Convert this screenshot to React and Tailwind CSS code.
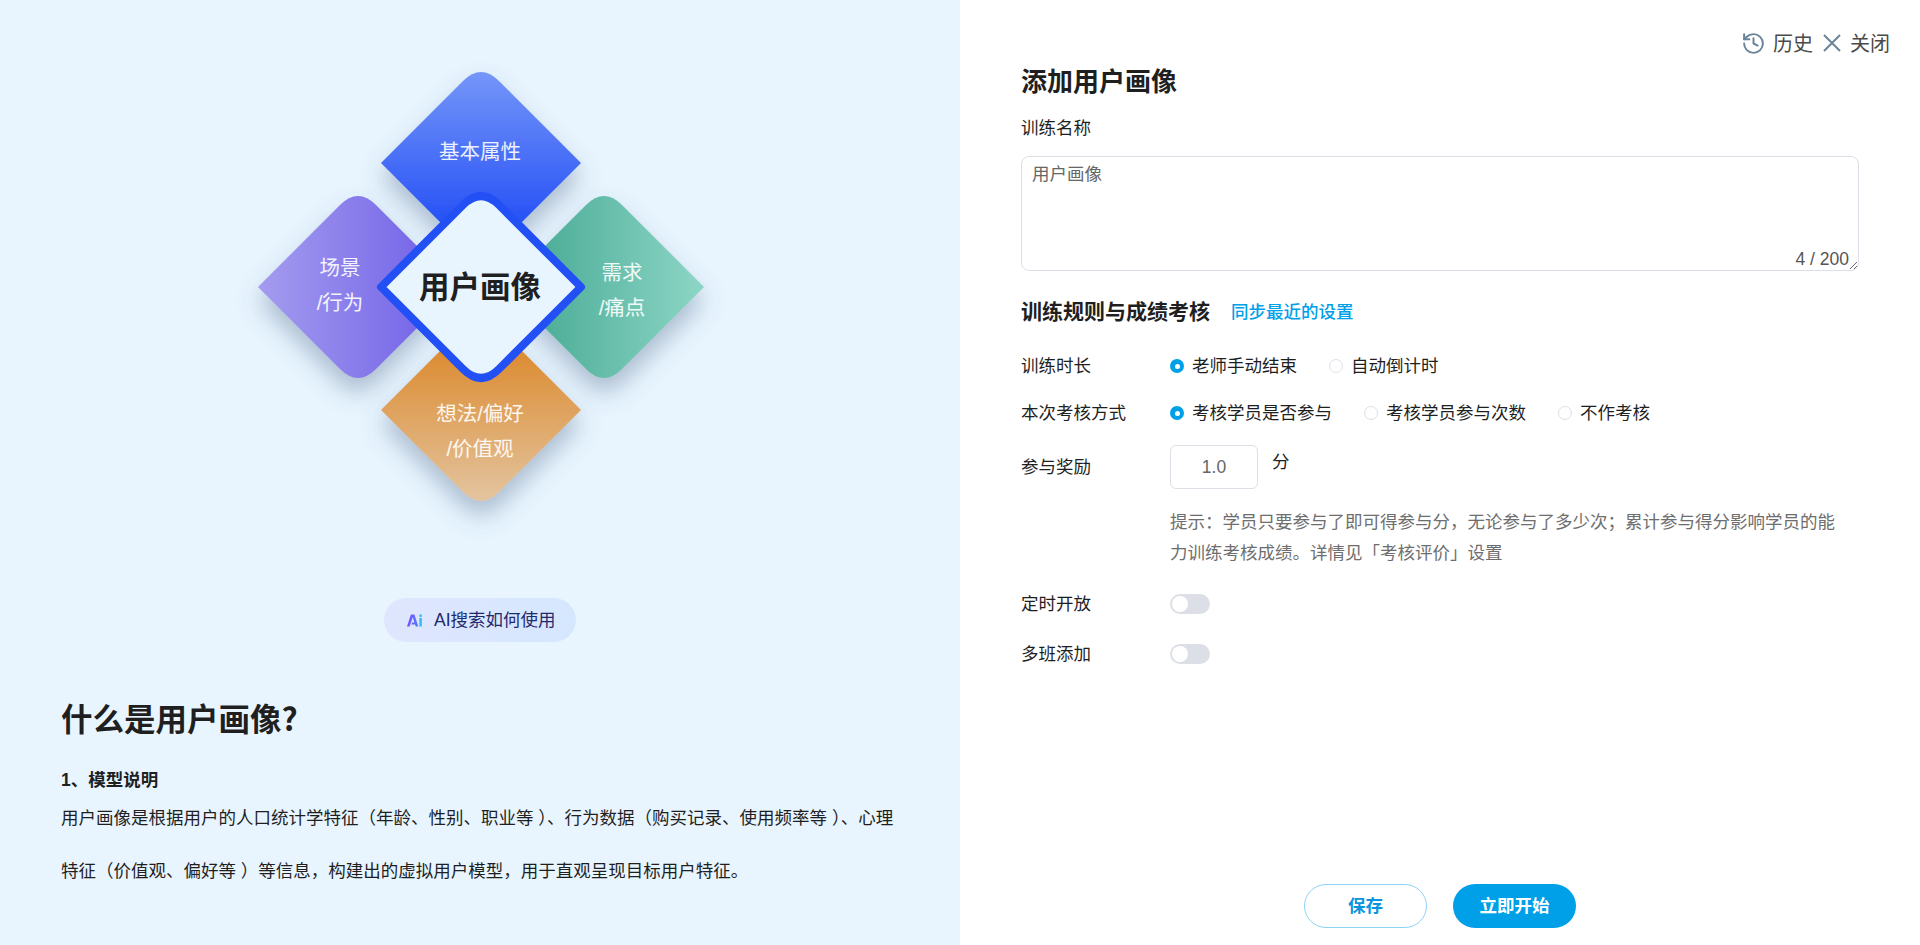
import { History } from "lucide-react";

// rotated square with sharp side corners and rounded top / bottom
function diamondPath(cx, cy, size = 100, d = 18) {
  return `M${cx - size} ${cy} L${cx - d} ${cy - size + d} Q${cx} ${cy - size} ${cx + d} ${cy - size + d} L${cx + size} ${cy} L${cx + d} ${cy + size - d} Q${cx} ${cy + size} ${cx - d} ${cy + size - d} Z`;
}

function Diagram() {
  return (
    <div className="relative h-[598px]">
      <svg width="960" height="598" viewBox="0 0 960 598" className="block">
        <defs>
          <linearGradient id="gTop" x1="0" y1="0" x2="0" y2="1">
            <stop offset="0" stopColor="#7596f9" />
            <stop offset="0.85" stopColor="#2550f5" />
          </linearGradient>
          <linearGradient id="gLeft" x1="0" y1="0" x2="1" y2="0">
            <stop offset="0" stopColor="#a49cef" />
            <stop offset="0.85" stopColor="#7565e8" />
          </linearGradient>
          <linearGradient id="gRight" x1="0" y1="0" x2="1" y2="0">
            <stop offset="0.1" stopColor="#46a993" />
            <stop offset="1" stopColor="#8dd6c6" />
          </linearGradient>
          <linearGradient id="gBottom" x1="0" y1="0" x2="0" y2="1">
            <stop offset="0.15" stopColor="#dc8a2e" />
            <stop offset="1" stopColor="#e3c4a0" />
          </linearGradient>
          <filter id="soft" x="-30%" y="-30%" width="160%" height="170%">
            <feDropShadow dx="0" dy="14" stdDeviation="12" floodColor="#44607f" floodOpacity="0.38" />
          </filter>
        </defs>
        <path d={diamondPath(481, 163)} fill="url(#gTop)" filter="url(#soft)" />
        <path d={diamondPath(358, 287)} fill="url(#gLeft)" filter="url(#soft)" />
        <path d={diamondPath(604, 287)} fill="url(#gRight)" filter="url(#soft)" />
        <path d={diamondPath(481, 410)} fill="url(#gBottom)" filter="url(#soft)" />
        <path d={diamondPath(481, 287)} fill="#e8f5ff" stroke="#2350f5" strokeWidth="8" strokeLinejoin="round" />
      </svg>

      <div className="absolute left-[380px] top-[134px] w-[200px] text-center text-[20.5px] leading-[35px] text-white/90">基本属性</div>
      <div className="absolute left-[260px] top-[250px] w-[160px] text-center text-[20.5px] leading-[35px] text-white/90">
        场景<br />/行为
      </div>
      <div className="absolute left-[542px] top-[255px] w-[160px] text-center text-[20.5px] leading-[35px] text-white/90">
        需求<br />/痛点
      </div>
      <div className="absolute left-[380px] top-[396px] w-[200px] text-center text-[20.5px] leading-[35px] text-white/90">
        想法/偏好<br />/价值观
      </div>
      <div className="absolute left-[380px] top-[267px] w-[200px] text-center text-[30.5px] leading-[40px] font-bold text-[#1f1f1f]">用户画像</div>
    </div>
  );
}

function AiMark() {
  return (
    <svg width="15" height="13" viewBox="0 0 15 13">
      <defs>
        <linearGradient id="gAi" x1="0" y1="0" x2="1" y2="0">
          <stop offset="0" stopColor="#7a4dff" />
          <stop offset="1" stopColor="#4f7dff" />
        </linearGradient>
      </defs>
      <path d="M0 12.5 L3.9 0.5 H7.4 L11.3 12.5 H8.7 L8.1 10.4 H4.4 L5 8.4 H7.5 L5.7 3.2 L2.6 12.5 Z" fill="url(#gAi)" />
      <rect x="12.4" y="0.5" width="2.4" height="2.4" fill="#35b6f2" />
      <rect x="12.4" y="4" width="2.4" height="8.5" fill="#35b6f2" />
    </svg>
  );
}

function LeftPanel() {
  return (
    <div className="w-[960px] h-full bg-[#e8f5ff]">
      <Diagram />
      <div className="mx-auto w-[192px] h-[44px] rounded-full bg-gradient-to-r from-[#dfe6fe] to-[#d5e7fe] flex items-center pl-[23px] gap-[12px]">
        <AiMark />
        <span className="pt-[1px] text-[17.5px] text-[#1f2a6e]">AI搜索如何使用</span>
      </div>
      <div className="pl-[61px] text-[#1f1f1f]">
        <h1 className="mt-[53px] text-[31.5px] leading-[44px] font-bold font-['Noto_Sans_CJK_SC',sans-serif]">什么是用户画像?</h1>
        <h3 className="mt-[29px] text-[17.5px] leading-[24px] font-bold">1、模型说明</h3>
        <p className="w-[838px] text-[17.5px] leading-[53px]">
          用户画像是根据用户的人口统计学特征（年龄、性别、职业等 ）、行为数据（购买记录、使用频率等 ）、心理特征（价值观、偏好等 ）等信息，构建出的虚拟用户模型，用于直观呈现目标用户特征。
        </p>
      </div>
    </div>
  );
}

function Radio({ checked, children }) {
  return (
    <label className="flex items-center gap-[8px]">
      {checked ? (
        <span className="w-[14px] h-[14px] rounded-full bg-[#00a0e9] flex items-center justify-center">
          <span className="w-[5px] h-[5px] rounded-full bg-white" />
        </span>
      ) : (
        <span className="w-[14px] h-[14px] rounded-full border border-[#dcdfe6] bg-white" />
      )}
      <span>{children}</span>
    </label>
  );
}

function Toggle() {
  return (
    <div className="w-[40px] h-[20px] rounded-full bg-[#dcdfe6] p-[2px]">
      <div className="w-[16px] h-[16px] rounded-full bg-white" />
    </div>
  );
}

function RightPanel() {
  return (
    <div className="flex-1 h-full flex flex-col bg-white text-[17.5px] text-[#1f1f1f]">
      <div className="mt-[31px] h-[26px] pr-[30px] flex items-center justify-end text-[20px] text-[#4a4a4a]">
        <History size={25} strokeWidth={1.9} className="text-[#6b8499] -mt-[2px]" />
        <span className="ml-[7px]">历史</span>
        <svg width="18" height="18" viewBox="0 0 18 18" className="ml-[10px] -mt-[2px] text-[#6b8499]">
          <path d="M1 1 L17 17 M17 1 L1 17" stroke="currentColor" strokeWidth="2" fill="none" />
        </svg>
        <span className="ml-[9px]">关闭</span>
      </div>

      <div className="px-[61px]">
        <h2 className="mt-[7px] text-[26px] leading-[36px] font-bold">添加用户画像</h2>
        <div className="mt-[15px] leading-[26px]">训练名称</div>
        <div className="relative mt-[15px]">
          <textarea
            defaultValue="用户画像"
            className="block w-full h-[115px] rounded-[8px] border border-[#dcdfe6] pl-[10px] pt-[4px] leading-[26px] text-[#666666] outline-none"
          ></textarea>
          <span className="absolute right-[10px] bottom-[1px] leading-[22px] text-[#555555]">4 / 200</span>
        </div>

        <div className="mt-[26px] flex items-center h-[30px]">
          <h3 className="text-[21px] font-bold">训练规则与成绩考核</h3>
          <a className="ml-[21px] text-[#00a0e9] font-medium">同步最近的设置</a>
        </div>

        <div className="mt-[26px] flex items-center h-[26px]">
          <div className="w-[149px]">训练时长</div>
          <div className="flex gap-[32px]">
            <Radio checked>老师手动结束</Radio>
            <Radio>自动倒计时</Radio>
          </div>
        </div>

        <div className="mt-[21px] flex items-center h-[26px]">
          <div className="w-[149px]">本次考核方式</div>
          <div className="flex gap-[32px]">
            <Radio checked>考核学员是否参与</Radio>
            <Radio>考核学员参与次数</Radio>
            <Radio>不作考核</Radio>
          </div>
        </div>

        <div className="mt-[19px] flex items-center">
          <div className="w-[149px] pt-[1px]">参与奖励</div>
          <input
            defaultValue="1.0"
            className="w-[88px] h-[44px] rounded-[6px] border border-[#dcdfe6] text-center text-[#666666] outline-none"
          />
          <span className="ml-[14px] mb-[10px]">分</span>
        </div>

        <p className="mt-[18px] ml-[149px] w-[680px] text-[17.5px] leading-[31px] text-[#6e6e6e]">
          提示：学员只要参与了即可得参与分，无论参与了多少次；累计参与得分影响学员的能力训练考核成绩。详情见「考核评价」设置
        </p>

        <div className="mt-[22px] flex items-center h-[26px]">
          <div className="w-[149px]">定时开放</div>
          <Toggle />
        </div>

        <div className="mt-[24px] flex items-center h-[26px]">
          <div className="w-[149px]">多班添加</div>
          <Toggle />
        </div>
      </div>

      <div className="mt-auto pb-[17px] flex justify-center gap-[26px]">
        <button className="w-[123px] h-[44px] rounded-full border border-[#8fd3f4] bg-white text-[#0a94de] font-bold">保存</button>
        <button className="w-[123px] h-[44px] rounded-full bg-[#00a0e9] text-white font-bold">立即开始</button>
      </div>
    </div>
  );
}

export default function App() {
  return (
    <div className="flex w-full h-[945px] overflow-hidden font-['Liberation_Sans','Noto_Sans_CJK_SC',sans-serif]">
      <LeftPanel />
      <RightPanel />
    </div>
  );
}
